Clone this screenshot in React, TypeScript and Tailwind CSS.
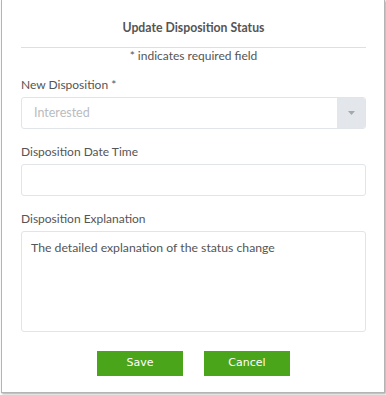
export default function App() {
  return (
    <div className="w-[386px] h-[395px] bg-white" style={{ fontFamily: 'Lato, "Open Sans", sans-serif' }}>
      <div className="ml-px w-[384px] h-[393px] bg-white border-x border-b border-[#b4b4b4] shadow-[1px_1px_2px_rgba(0,0,0,0.35)] pl-[19px] pr-[18px] pt-5">
        <div className="border-b border-[#dcdfe4] pb-[11px] text-center text-[12.25px] leading-4 font-bold text-[#555]">
          Update Disposition Status
        </div>
        <div className="text-center text-[12px] leading-[13px] text-[#555] mt-px">* indicates required field</div>

        <label className="block mt-[15px] text-[12px] leading-4 text-[#555]">New Disposition *</label>
        <div className="mt-1 flex h-8 border border-[#e1e4e9] rounded-[3px] overflow-hidden">
          <div className="flex-1 flex items-center pl-3 text-[12.5px] text-[#b9bcc1]">Interested</div>
          <div className="w-7 bg-[#e3e6eb] flex items-center justify-center">
            <svg width="7" height="4" viewBox="0 0 7 4">
              <path d="M0 0h7L3.5 4z" fill="#a5a8ad" />
            </svg>
          </div>
        </div>

        <label className="block mt-[15px] text-[12px] leading-4 text-[#555]">Disposition Date Time</label>
        <div className="mt-1 h-8 border border-[#e1e4e9] rounded-[3px]" />

        <label className="block mt-[15px] text-[12px] leading-4 text-[#555]">Disposition Explanation</label>
        <div className="mt-1 h-[101px] border border-[#e1e4e9] rounded-[3px] px-[9px] pt-2 text-[12.25px] leading-4 text-[#555]">
          The detailed explanation of the status change
        </div>

        <div className="mt-[19px] flex justify-center gap-[21px]" style={{ fontFamily: '"DejaVu Sans", Verdana, sans-serif' }}>
          <button className="w-[86px] h-[25px] bg-[#4aa51b] text-white text-[11px]">Save</button>
          <button className="w-[86px] h-[25px] bg-[#4aa51b] text-white text-[11px]">Cancel</button>
        </div>
      </div>
    </div>
  )
}
